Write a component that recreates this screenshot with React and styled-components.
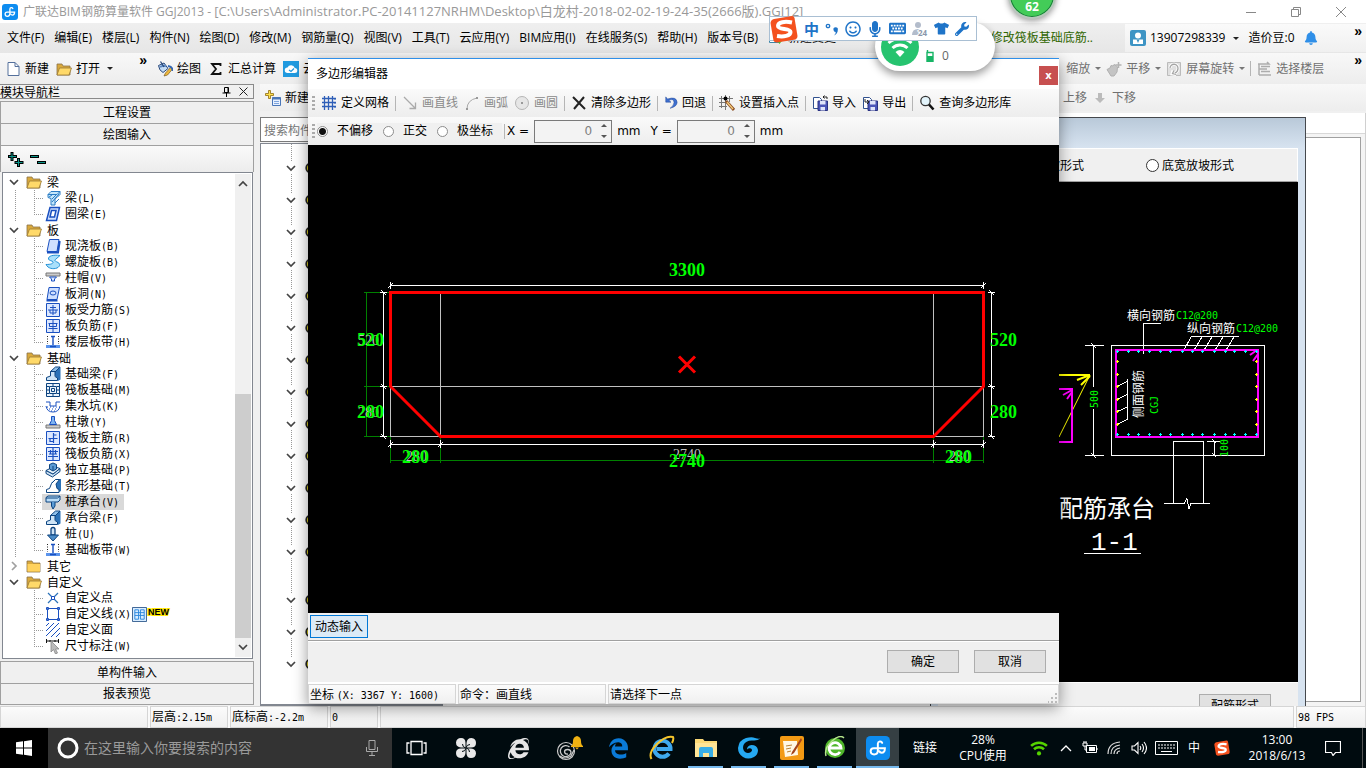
import styled, { createGlobalStyle, css } from "styled-components";
import {
  FaEdgeLegacy,
  FaInternetExplorer,
  FaKeyboard,
  FaMicrophone,
  FaRegSmile,
  FaTshirt,
  FaWrench,
  FaBell,
} from "react-icons/fa";

const UI = `"Open Sans", "Noto Sans CJK SC", sans-serif`;
const SONG = `"Noto Sans CJK SC", sans-serif`;

const GlobalStyle = createGlobalStyle`
  * { box-sizing: border-box; }
  body {
    margin: 0;
    background: #f0f0f0;
    color: #000;
    font: 12px/16px ${UI};
    overflow: hidden;
  }
  button, input { font: inherit; color: inherit; }
  button { padding: 0; border: 0; background: none; white-space: nowrap; }
  a { color: inherit; text-decoration: none; }
  svg { flex: none; display: block; }
  ul { margin: 0; padding: 0; list-style: none; }
`;

const Desktop = styled.div`
  position: relative;
  display: flex;
  flex-direction: column;
  min-height: 100vh;
  overflow: hidden;
`;

/* ---------- title + menu ---------- */

const TitleBar = styled.header`
  display: flex;
  align-items: center;
  height: 23px;
  padding: 0 20px 0 2px;
  gap: 5px;
  background: #fff;
  color: #999;
`;

const TitleText = styled.h1`
  flex: 1;
  margin: 0;
  font-size: 12px;
  font-weight: 400;
  white-space: nowrap;
`;

const FilePath = styled.span`
  font-size: 13px;
`;

const WindowButtons = styled.div`
  display: flex;
  gap: 35px;
`;

const MenuBar = styled.nav`
  display: flex;
  align-items: center;
  height: 30px;
  padding-left: 7px;
  gap: 10px;
  background: linear-gradient(#efefef, #e6e6e6);
  white-space: nowrap;
`;

const Tip = styled.a`
  margin-left: auto;
  color: #2f6600;
`;

const UserBox = styled.div`
  display: flex;
  align-items: center;
  height: 28px;
  width: 241px;
  margin-left: 22px;
  padding: 0 4px 0 5px;
  gap: 4px;
  background: linear-gradient(#fafafa, #f0f0f0);
`;

const Phone = styled.span`
  margin-right: 4px;
`;

const Beans = styled.span`
  margin: 0 5px;
`;

const Caret = styled.i`
  border: 3px solid transparent;
  border-top-color: ${(p) => p.$color || "#222"};
  border-bottom: 0;
`;

const More = styled.button`
  margin-left: ${(p) => p.$gap || "auto"};
  align-self: flex-start;
  color: #000;
  font: bold 14px/14px "Liberation Sans", sans-serif;
`;

/* ---------- toolbars ---------- */

const ToolBar = styled.div`
  display: flex;
  height: ${(p) => (p.$low ? "27px" : "31px")};
  background: linear-gradient(#f8f8f8, #ededed);
`;

const ToolGroup = styled.div`
  display: flex;
  align-items: center;
  gap: ${(p) => (p.$end ? "5px" : "7px")};
  padding: 0 5px;
  width: ${(p) => p.$width || "auto"};
  color: ${(p) => (p.$muted ? "#707070" : "inherit")};
  ${(p) => p.$end && css`
    margin-left: auto;
    padding-right: ${p.$end};
  `}
`;

const ToolButton = styled.button`
  display: flex;
  align-items: center;
  gap: 4px;
  color: ${(p) => (p.disabled ? "#8a8a8a" : "inherit")};
`;

const Sep = styled.i`
  width: 1px;
  height: 15px;
  background: #b5b5b5;
`;

const Grip = styled.i`
  width: 3px;
  height: 14px;
  background: repeating-linear-gradient(#aaa 0 2px, transparent 2px 4px);
`;

/* ---------- work area ---------- */

const Workspace = styled.main`
  flex: 1;
  display: flex;
  gap: 6px;
  min-height: 622px;
`;

const Nav = styled.aside`
  display: flex;
  flex-direction: column;
  width: 254px;
  padding-bottom: 1px;
  font-family: ${SONG};
`;

const NavHeader = styled.div`
  display: flex;
  align-items: center;
  justify-content: space-between;
  height: 15px;
  margin-bottom: 2px;
  padding-right: 4px;
  border: 1px solid #8a8a8a;
  border-left: 0;
  line-height: 13px;
`;

const NavButton = styled.button`
  height: 22px;
  padding-bottom: 2px;
  border: 1px solid #a0a0a0;
  border-bottom-width: ${(p) => (p.$last ? "1px" : "0")};
  background: #f0f0f0;
  line-height: 18px;
`;

const NavTools = styled.div`
  display: flex;
  align-items: center;
  gap: 6px;
  height: 27px;
  padding-left: 6px;
  border: 1px solid #a0a0a0;
  border-bottom: 0;
  background: linear-gradient(#fafafa, #ececec);
`;

const TreeBox = styled.div`
  flex: 1;
  display: flex;
  margin: 0 1px 2px 2px;
  border: 1px solid #828790;
  background: #fff;
`;

const TreeList = styled.ul`
  flex: 1;
  padding-top: 1px;
`;

const dots = "repeating-linear-gradient(#999 0 1px, transparent 1px 2px)";
const dotsX = "repeating-linear-gradient(90deg, #999 0 1px, transparent 1px 2px)";

const FolderRow = styled.li`
  display: flex;
  align-items: center;
  height: 16px;
  padding-left: 5px;
  white-space: nowrap;
  svg + svg { margin: 0 5px 0 6px; }
`;

const LeafRow = styled.li`
  display: flex;
  align-items: center;
  height: 16px;
  padding-left: 39px;
  white-space: nowrap;
  background:
    ${dots} 31px 0 / 1px ${(p) => (p.$last ? "8px" : "100%")} no-repeat,
    ${dotsX} 31px 8px / 10px 1px no-repeat
    ${(p) => !p.$tail && css`, ${dots} 12px 0 / 1px 100% no-repeat`};
`;

const LeafLabel = styled.span`
  display: flex;
  align-items: center;
  height: 16px;
  padding: 0 ${(p) => (p.$selected ? "5px" : "1px")} 0 3px;
  gap: 4px;
  background: ${(p) => (p.$selected ? "#d9d9d9" : "transparent")};
`;

const Mono = styled.span`
  font: 10px/16px "DejaVu Sans Mono", monospace;
`;

const ScrollBar = styled.div`
  display: flex;
  flex-direction: column;
  align-items: center;
  width: 16px;
  margin: 1px 1px 1px 0;
  padding: 4px 0;
  background: #f0f0f0;
`;

const Track = styled.div`
  flex: 205;
`;

const Thumb = styled.div`
  width: 100%;
  flex: 245;
  margin-bottom: 3px;
  background: #cdcdcd;
`;

const Main = styled.section`
  flex: 1;
  display: flex;
  flex-direction: column;
`;

const Body = styled.div`
  flex: 1;
  display: flex;
  gap: 4px;
  padding-top: 2px;
`;

const ListColumn = styled.div`
  display: flex;
  flex-direction: column;
  width: 183px;
  padding-top: 4px;
`;

const SearchInput = styled.input`
  height: 25px;
  padding: 0 3px;
  border: 1px solid #7a7a7a;
  background: #fff;
  font-family: ${SONG};
  &::placeholder { color: #777; }
`;

const ListBox = styled.div`
  flex: 1;
  margin-top: 1px;
  padding-top: 17px;
  border: 2px solid #828790;
  border-width: 1px 1px 2px;
  background: #fff ${dots} 30px 0 / 1px 520px no-repeat;
`;

const ListRow = styled.div`
  display: flex;
  align-items: center;
  height: 14px;
  padding-left: 24px;
  margin-bottom: ${(p) => (p.$wide ? "34px" : "18px")};
  gap: 7px;
  svg:first-child { background: #fff; }
`;

const DrawColumn = styled.div`
  flex: 1;
  display: flex;
  flex-direction: column;
  padding: 0 4px 4px 0;
  border-right: 1px solid #d0d0d0;
  background: linear-gradient(#fff 20px, #d8d8d8 20px 21px, #f4f4f4 21px);
`;

const DrawBox = styled.div`
  flex: 1;
  margin-top: 24px;
  border: 1px solid #a0a0a0;
  background: #fff;
`;

const StatusBar = styled.footer`
  display: flex;
  gap: 2px;
  height: 22px;
  background: #fafafa;
  font-family: ${SONG};
`;

const StatusCell = styled.div`
  flex: ${(p) => (p.$width ? "none" : 1)};
  width: ${(p) => p.$width || "auto"};
  padding-left: 1px;
  border: 1px solid #d5d5d5;
  background: linear-gradient(#fbfbfb, #f0f0f0);
  line-height: 18px;
  white-space: nowrap;
`;

/* ---------- windows ---------- */

const BackWindow = styled.section`
  position: absolute;
  left: 930px;
  right: 60px;
  top: 117px;
  bottom: 62px;
  display: flex;
  flex-direction: column;
  padding: 30px 7px 0;
  border: 1px solid #45484d;
  border-bottom: 0;
  background: linear-gradient(#b9c9d9, #d7e3f0 30px);
  font-family: ${SONG};
`;

const FormRow = styled.div`
  display: flex;
  align-items: center;
  justify-content: flex-end;
  gap: 62px;
  height: 34px;
  padding-right: 63px;
  border: 1px solid #fff;
  border-bottom-color: #a0a0a0;
  background: #f0f0f0;
`;

const RadioLabel = styled.label`
  display: flex;
  align-items: center;
  gap: ${(p) => p.$gap || "3px"};
  white-space: nowrap;
`;

const Radio = styled.input.attrs({ type: "radio" })`
  appearance: none;
  width: ${(p) => p.$size || "13px"};
  height: ${(p) => p.$size || "13px"};
  margin: 0;
  border: 1px solid ${(p) => (p.$soft ? "#8c8c8c" : "#333")};
  border-radius: 50%;
  background: #fff;
  &:checked { background: radial-gradient(#111 0 3px, #fff 4px); }
`;

const Canvas = styled.div`
  flex: 1;
  display: flex;
  background: #000;
  svg { width: 100%; height: 100%; }
`;

const BackFooter = styled.div`
  display: flex;
  justify-content: flex-end;
  height: 24px;
  padding: 11px 27px 0;
  border-top: 1px solid #fff;
  background: #f0f0f0;
  overflow: hidden;
`;

const PushButton = styled.button`
  flex: none;
  width: 72px;
  height: 23px;
  padding-bottom: 2px;
  border: 1px solid #adadad;
  background: #e1e1e1;
  line-height: 18px;
`;

const EditorWindow = styled.section`
  position: absolute;
  left: 308px;
  right: 307px;
  top: 58px;
  bottom: 64px;
  display: flex;
  flex-direction: column;
  border-top: 1px solid #2f8fe8;
  background: #f0f0f0;
  box-shadow: 0 4px 14px rgba(0, 0, 0, 0.42);
`;

const EditorTitle = styled.div`
  display: flex;
  align-items: center;
  justify-content: space-between;
  height: 30px;
  padding: 0 1px 0 8px;
  background: #fff;
`;

const CloseButton = styled.button`
  width: 19px;
  height: 19px;
  margin-top: 3px;
  background: #c75050;
  color: #fff;
  font: bold 10px/16px "DejaVu Sans", sans-serif;
`;

const EditorTools = styled.div`
  display: flex;
  align-items: center;
  gap: ${(p) => p.$gap || "6px"};
  height: 28px;
  padding: 0 4px;
  background: linear-gradient(#fafafa, #ededed);
  white-space: nowrap;
`;

const RadioSet = styled.div`
  display: flex;
  gap: 10px;
  padding-right: 9px;
  background: #f0f0f0;
`;

const Field = styled.label`
  display: flex;
  align-items: center;
  gap: 5px;
  margin-right: 8px;
  font-family: "DejaVu Sans", sans-serif;
`;

const Spin = styled.span`
  display: flex;
  align-items: center;
  width: 78px;
  height: 23px;
  padding-right: 4px;
  border: 1px solid #7a7a7a;
  background: #f3f3f3;
`;

const SpinInput = styled.input`
  flex: 1;
  width: 20px;
  padding: 0;
  border: 0;
  background: none;
  color: #808080;
  text-align: right;
`;

const Arrows = styled.span`
  display: flex;
  flex-direction: column;
  gap: 8px;
  padding-left: 9px;
`;

const Arrow = styled.button`
  border: 3px solid transparent;
  ${(p) =>
    p.$up
      ? "border-top: 0; border-bottom-color: #555;"
      : "border-bottom: 0; border-top-color: #555;"}
`;

const InputStrip = styled.div`
  height: 28px;
  padding: 2px;
  border-bottom: 1px solid #a0a0a0;
`;

const DynamicButton = styled.button`
  width: 58px;
  height: 23px;
  border: 1px solid #0078d7;
  background: #dcebf7;
`;

const Actions = styled.div`
  display: flex;
  justify-content: flex-end;
  gap: 15px;
  height: 41px;
  padding: 8px 13px 0;
  border-top: 1px solid #fff;
  font-family: ${SONG};
`;

const EditorStatus = styled.div`
  display: flex;
  gap: 2px;
  height: 22px;
  border-top: 2px solid #fff;
  background: #fafafa;
  font-family: ${SONG};
`;

const ResizeCell = styled(StatusCell)`
  display: flex;
  justify-content: space-between;
  align-items: flex-end;
`;

/* ---------- floating helpers ---------- */

const Ball = styled.div`
  position: absolute;
  left: 1008px;
  top: -29px;
  width: 48px;
  height: 48px;
  border: 2px solid #b9c7bd;
  border-radius: 50%;
  background: #43cc58;
  box-shadow: inset 0 0 0 1px #167a38, 0 2px 6px rgba(0, 0, 0, 0.4);
  color: #fff;
  font: bold 12px/16px "Open Sans", sans-serif;
  padding-top: 26px;
  text-align: center;
`;

const Pill = styled.div`
  position: absolute;
  left: 875px;
  top: 22px;
  display: flex;
  align-items: center;
  gap: 7px;
  width: 120px;
  height: 49px;
  padding-left: 6px;
  border-radius: 25px;
  background: #fff;
  box-shadow: 0 4px 8px rgba(0, 0, 0, 0.4);
  color: #666;
`;

const Devices = styled.span`
  display: flex;
  align-items: center;
  gap: 8px;
  padding-top: 18px;
`;

const Ime = styled.div`
  position: absolute;
  left: 769px;
  top: 16px;
  display: flex;
  align-items: center;
  gap: 6px;
  width: 208px;
  height: 25px;
  border: 1px solid #a9bfd3;
  background: #fff;
  color: #1f74c8;
  font: bold 15px/16px "Noto Sans CJK SC", sans-serif;
`;

/* ---------- taskbar ---------- */

const TaskBar = styled.footer`
  display: flex;
  height: 40px;
  background: #000b0f;
  color: #fff;
`;

const Start = styled.button`
  display: grid;
  place-items: center;
  width: 48px;
  background: #000;
`;

const TaskSearch = styled.label`
  display: flex;
  align-items: center;
  gap: 5px;
  width: 344px;
  padding: 0 13px 0 9px;
  background: #333;
`;

const TaskInput = styled.input`
  flex: 1;
  min-width: 0;
  padding: 0;
  border: 0;
  background: none;
  font-size: 14px;
  &::placeholder { color: #9a9a9a; }
`;

const Task = styled.button`
  display: grid;
  place-items: center;
  width: ${(p) => p.$w};
  background: ${(p) => (p.$active ? "#353f43" : "transparent")};
  ${(p) =>
    p.$open &&
    css`
      background-image: linear-gradient(#76b9ed, #76b9ed);
      background-repeat: no-repeat;
      background-position: bottom;
      background-size: ${p.$active ? "100%" : "35px"} 2px;
    `}
`;

const Links = styled.span`
  margin-left: 14px;
  line-height: 40px;
`;

const Tray = styled.div`
  display: flex;
  margin-left: auto;
  padding-right: 14px;
  border-right: 1px solid #555;
  margin-right: 3px;
`;

const TrayItem = styled.div`
  display: grid;
  place-content: center;
  width: ${(p) => p.$w};
  text-align: center;
  white-space: nowrap;
`;

/* ---------- icons ---------- */

const Svg = ({ s = 16, w, h, box = "0 0 16 16", children }) => (
  <svg width={w || s} height={h || s} viewBox={box} fill="none" aria-hidden="true">
    {children}
  </svg>
);

const AppLogo = ({ s = 16 }) => (
  <Svg s={s}>
    <rect width="16" height="16" rx="3" fill="#0d8cf0" />
    <path d="M10.800 4.600A1.500 1.500 0 0 0 7.900 5v4.500q0 2.800-2.500 2.800-2.300 0-2.300-2.200 0-2 2-2h7.500q0 3-2.200 3-1.200 0-1.500-1" stroke="#fff" strokeWidth="1.300" strokeLinecap="round" />
  </Svg>
);

const SogouLogo = ({ s = 16 }) => (
  <Svg s={s} box="0 0 28 28">
    <path d="M4 4 22 1q2 0 2.500 2l3 18q0 3-2 3.500L7 27.500q-3 0-3.500-2L.5 8Q1 4.500 4 4z" fill="#f4511e" />
    <path d="M22 7.500C15 6 8 7 8 11s12.500 2 12.500 6-7 5-13.500 4" stroke="#fff" strokeWidth="4" />
  </Svg>
);

const Fold = ({ open }) => (
  <Svg>
    <path d="M1 3h5l1 2h7v9H1z" fill="#d9a93c" stroke="#8a7247" strokeWidth=".8" />
    {open ? (
      <path d="M3.500 7h12L13 14H1z" fill="#ffd969" stroke="#9b7a35" strokeWidth=".8" />
    ) : (
      <path d="M1.500 6h12.500v7.500H1.500z" fill="#ffd25e" />
    )}
  </Svg>
);

const Chevron = ({ kind = "down" }) => (
  <Svg s={12} box="0 0 12 12">
    <path
      d={{ down: "M2 4l4 4 4-4", up: "M2 8l4-4 4 4", right: "M4 2l4 4-4 4" }[kind]}
      stroke={kind === "right" ? "#a0a0a0" : "#444"}
      strokeWidth="1.700"
    />
  </Svg>
);

const B = "#1a50c0";
const D = "#0d4480";
const frame = <path d="M1.500 1.500h13v13h-13z" fill="#dce8ff" stroke={B} />;
const strip = (
  <>
    <path d="M1 1h14v10H1z" fill="#fff" />
    <path d="M1 11h14v3H1z" fill="#5b94ec" />
    <path d="M2.500 2v8M13.500 2v8" stroke="#222" strokeDasharray="1 1.500" />
    <path d="M6 2.500h4M8 2v9M5 12.500h6" stroke={B} strokeWidth="1.400" />
  </>
);
const beam3d = (
  <>
    <path d="M8 5.500 12 1h3.500v12.500L13 15z" fill="#2b72b8" />
    <path d="M5.500 5.500 10.500 1H15l-5 5z" fill="#8fc0ea" stroke={D} />
    <path d="M5.500 5.500H10v5l2.500 1.500v2.500h-11v-3l4-1.500z" fill="#cfe5f7" stroke={D} />
  </>
);

const TREE_ICONS = {
  beam: (
    <>
      <path d="M3 4.500h9L15 1.500H6zM3 4.500v3l3 1V15h4V8.500l2-1 3-3v-3" fill="#c5e7fb" stroke="#2b7cc4" />
      <path d="M4 7l3-2M7 9l4-4M7 12l7-8M10 13l4-4" stroke="#2b7cc4" />
    </>
  ),
  ring: <path d="M5 1.500h9.500L11.500 14.500H1.500zM6.500 4.500h4.500L9.500 11H5z" fill="#cfe0ff" fillRule="evenodd" stroke={B} strokeWidth="1.500" />,
  slab: (
    <>
      <path d="M4.500 1.500h9.500L12 13.500H2z" fill="#cfe0ff" stroke={B} />
      <path d="M2 14.500h11L14.700 3" stroke={B} strokeWidth="2" />
    </>
  ),
  spiral: <path d="M15 1.500C8 .5 3 2 3.500 5c.5 2 4 1.500 4.500 3s-2 2.500-7 2.500c2 4 7 5 11 3.500 4-2 3-5 0-6-2-1-3-1.500-1-3z" fill="#a9e0fb" stroke="#2492d8" />,
  cap: (
    <>
      <path d="M1 3h14v3H1z" fill="#ccc" stroke="#777" />
      <path d="M4.500 7h7L9.500 9v2h-3V9z" fill="#dce8ff" stroke={B} />
    </>
  ),
  hole: (
    <>
      <path d="M4 1.500h10.500L12 13.500H2z" fill="#cfe0ff" stroke={B} />
      <ellipse cx="8" cy="7" rx="3" ry="2" stroke={B} />
      <path d="M1.500 14.500h11" stroke={B} strokeWidth="2" />
    </>
  ),
  force: <>{frame}<path d="M3 8h10M8 3v10M5 5.500h6M5 8v3h6V8" stroke={B} /></>,
  neg: <>{frame}<path d="M3.500 5.500h9M3.500 10.500h9M8 2v12M4.500 5.500v3h7v-3" stroke={B} /></>,
  band: strip,
  beam3d,
  raft: <path d="M1.500 1.500h13v13h-13zM4.500 4.500h7v7h-7zM6.500 6.500h3v3h-3zM1 8h4M11 8h4M8 1v4M8 11v4M1 4.500h3M12 4.500h3M1 11.500h3M12 11.500h3" fill="#eaf3fb" stroke={D} />,
  pit: (
    <>
      <path d="M1 4h4v4h6V4h4M1 8q1 6 7 6t7-6" stroke={B} />
      <path d="M2 9h12M4 11h9M6 13h5" stroke={B} strokeDasharray="1 2" />
    </>
  ),
  pier: (
    <>
      <path d="M1 11h14v3H1z" fill="#ccc" stroke="#777" />
      <path d="M6.500 2.500h3v4l2 4h-7l2-4z" fill="#7fb4f0" stroke={B} />
    </>
  ),
  rmain: <>{frame}<path d="M3.500 8.500h9M8.500 3v10M8.500 5h3M5 8.500v3h3.500" stroke={B} strokeWidth="1.200" /></>,
  rneg: <>{frame}<path d="M3 5.500h10M3 10.500h10M5.500 4v4M10.500 4v4M8 2v12M4 8h8" stroke={B} strokeWidth="1.200" /></>,
  iso: (
    <>
      <path d="M1 8.500 8 12l7-5.500v3L7.500 15 1 11.500z" fill="#cfe3f5" stroke={D} />
      <path d="M1 8.500 5 6.500l7-1 3 1L8 12z" fill="#e8f3fb" stroke={D} />
      <path d="M4.500 2.500 8 1l3.500 1.500V7L8 9 4.500 7zM8 4v5" fill="#5b9bd4" stroke={D} />
    </>
  ),
  stripf: (
    <>
      <path d="M6 5 11 1h5v12l-2 1z" fill="#2b72b8" />
      <path d="M1.500 14.500v-3l3-1 2-5 4-4h4L11 6l1 4.500 2 1v3z" fill="#fff" stroke={D} />
    </>
  ),
  pilecap: (
    <>
      <path d="M1 3.500 3 2h12v4l-2 2H1z" fill="#b9dcf7" stroke={D} />
      <path d="M1 4h11.500L15 2" stroke={D} />
      <path d="M6.500 8v4L8 15l2-3V8" fill="#5b9bd4" stroke={D} />
    </>
  ),
  pile: (
    <>
      <path d="M8 1.500q2 0 2 2V9H6V3.500q0-2 2-2z" fill="#cfe3f5" stroke={D} strokeWidth="1.300" />
      <path d="M2.500 9h11L8 15z" fill="#4b8cc8" stroke={D} />
    </>
  ),
  point: <><path d="M3 3l10 10M13 3 3 13" stroke="#2b72b8" strokeWidth="1.200" /><path d="M6.500 6.500h3v3h-3z" fill="#fff" stroke={B} /></>,
  line: <path d="M2.500 2.500h11v11h-11zM1.500 1.500h2v2h-2zM12.500 1.500h2v2h-2zM1.500 12.500h2v2h-2zM12.500 12.500h2v2h-2z" fill="#fff" stroke={B} />,
  face: <path d="M1 4l3-3M1 9l8-8M1 14 14 1M6 15l9-9M11 15l4-4" stroke={B} />,
  dim: (
    <>
      <path d="M1 3h13M1.500 1v4M13.500 1v4M5 2v2M10 2v2" stroke="#111" />
      <path d="M6 3v11l2.500-2.500L10.500 16l2-1-2-4H14z" fill="#bbb" stroke="#888" strokeWidth=".8" />
    </>
  ),
};

const NewDoc = () => (
  <Svg><path d="M3 1.500h7l4 4v9H3z" fill="#fff" stroke="#54709c" /><path d="M10 1.500v4h4" stroke="#54709c" /></Svg>
);

const Brush = () => (
  <Svg>
    <path d="M1.500 4.500 7 2l4 5.500-5 4q-4-2-4.500-7z" fill="#c4dcf5" stroke="#28477a" />
    <path d="M3 6q3-2 6-1" stroke="#5b88c4" strokeWidth="2" />
    <path d="M3.500.5 7 6" stroke="#28477a" strokeWidth="1.300" />
    <path d="M14 6 8.500 12 7 15l3.500-1L15.500 8z" fill="#f0b93a" stroke="#7a5a20" strokeWidth=".7" />
    <path d="M11 5q5 1 4.500 5" stroke="#3566b0" strokeWidth="1.800" />
  </Svg>
);

const Cloud = () => (
  <Svg>
    <path d="M0 0h16v16H0z" fill="#219adf" />
    <path d="M4.500 12a2.700 2.700 0 0 1 0-5.500 4 4 0 0 1 7.300.5 2.500 2.500 0 0 1 0 5z" fill="#fff" />
    <path d="M6 9l2 1.500L11 7.500" stroke="#219adf" strokeWidth="1.300" />
  </Svg>
);

const Pan = () => (
  <Svg>
    <path d="M1 8.500 4 7l1-2.500 2 .5 1-1.500 2 1 1.500 1.500-.5 5-3 4H5z" fill="#c4c4c4" stroke="#b0b0b0" />
    <path d="M12.500 1v6M9.500 4h6" stroke="#b3b3b3" strokeWidth="1.500" />
  </Svg>
);

const Rotate = () => (
  <Svg><path d="M1.500 1.500h13v13h-13z" fill="#e0e0e0" stroke="#bbb" /><path d="M4 7a4 4 0 0 1 8 .5q0 3-3 4.500M7 9.500 6 13l4 .5" stroke="#fff" strokeWidth="3" /><path d="M4 7a4 4 0 0 1 8 .5q0 3-3 4.500M8 9.500 6.500 12.500l3.500 1" stroke="#a5a5a5" strokeWidth="1.300" /></Svg>
);

const Floors = () => (
  <Svg><path d="M2 3h11l-2-2M5 5.500h9M3 8h8M5 10.500h9M3 14h12M3 3v11" stroke="#adadad" strokeWidth="1.500" /></Svg>
);

const AddTable = () => (
  <Svg>
    <path d="M7.500 7.500h8v8h-8z" fill="#e8f1ff" stroke="#4a76b8" />
    <path d="M7.500 8.500h8" stroke="#4a76b8" strokeWidth="2" />
    <path d="M9 11.500h5M9 13.500h5" stroke="#7fa5dd" />
    <path d="M3.500.5h2v3h3v2h-3v3h-2v-3h-3v-2h3z" fill="#ffe14d" stroke="#8d6b12" strokeWidth=".8" />
  </Svg>
);

const Grid = () => (
  <Svg><path d="M3.500 1v14M7.500 1v14M11.500 1v14M1 3.500h14M1 7.500h14M1 11.500h14" stroke="#2f5fb8" strokeWidth="1.300" /><path d="M14 3v10" stroke="#2f5fb8" strokeDasharray="2 2" /></Svg>
);

const Undo = () => (
  <Svg s={14}><path d="M2 1v6h6L5.500 5Q11 2.500 11.500 7q0 4-4.500 7Q15 12 15 7 14 0 4 3.500z" fill="#3d6fd0" stroke="#23489a" strokeWidth=".6" /></Svg>
);

const InsertPoint = () => (
  <Svg>
    <path d="M2.500 1v12M6.500 0v15M10.500 1v6M0 3.500h14M0 7.500h9M0 11.500h8" stroke="#777" />
    <circle cx="6.500" cy="3.500" r="2" fill="#000" />
    <path d="M7 6l8 9" stroke="#8a4b20" strokeWidth="3" />
    <path d="M8 7l6 7" stroke="#f1c877" strokeWidth="1.500" />
  </Svg>
);

const Disk = ({ out }) => (
  <Svg>
    <path d="M1.500 2.500h6l2 2v9h-8z" fill="#fff" stroke="#31518f" />
    <path d="M6 6h9.500v9.500H6z" fill="#4a55b8" stroke="#2a3382" />
    <path d="M8 6h5.500v3.500H8zM8.500 12h4.500v3.500H8.500z" fill="#dfe4fa" />
    <path d={out ? "M3 4v3h4M5 5l2 2-2 2" : "M15 4V2h-4M12.500.5 11 2l1.500 1.500"} stroke="#222" />
  </Svg>
);

const Magnifier = () => (
  <Svg><circle cx="6.500" cy="6" r="4.700" fill="#e3f4fb" stroke="#333" strokeWidth="1.300" /><path d="M10 9.500l4.500 5" stroke="#111" strokeWidth="2.600" /></Svg>
);

const Wifi = ({ s, color }) => (
  <Svg s={s} box="0 0 24 24">
    <path d="M2.500 9.500a13.500 13.500 0 0 1 19 0M6 13.500a8.500 8.500 0 0 1 12 0" stroke={color} strokeWidth="3" />
    <circle cx="12" cy="18.500" r="2.500" fill={color} />
  </Svg>
);

const SizeGrip = () => (
  <Svg s={10} box="0 0 10 10"><path d="M7 0h2v2H7zM7 4h2v2H7zM7 8h2v2H7zM3 4h2v2H3zM3 8h2v2H3zM0 8h1v2H0z" fill="#bbb" /></Svg>
);

/* ---------- data ---------- */

const tree = [
  { name: "梁", open: true, items: [["beam", "梁", "(L)"], ["ring", "圈梁", "(E)"]] },
  {
    name: "板",
    open: true,
    items: [
      ["slab", "现浇板", "(B)"],
      ["spiral", "螺旋板", "(B)"],
      ["cap", "柱帽", "(V)"],
      ["hole", "板洞", "(N)"],
      ["force", "板受力筋", "(S)"],
      ["neg", "板负筋", "(F)"],
      ["band", "楼层板带", "(H)"],
    ],
  },
  {
    name: "基础",
    open: true,
    items: [
      ["beam3d", "基础梁", "(F)"],
      ["raft", "筏板基础", "(M)"],
      ["pit", "集水坑", "(K)"],
      ["pier", "柱墩", "(Y)"],
      ["rmain", "筏板主筋", "(R)"],
      ["rneg", "筏板负筋", "(X)"],
      ["iso", "独立基础", "(P)"],
      ["stripf", "条形基础", "(T)"],
      ["pilecap", "桩承台", "(V)"],
      ["beam3d", "承台梁", "(F)"],
      ["pile", "桩", "(U)"],
      ["band", "基础板带", "(W)"],
    ],
  },
  { name: "其它", open: false, items: [] },
  {
    name: "自定义",
    open: true,
    items: [["point", "自定义点"], ["line", "自定义线", "(X)"], ["face", "自定义面"], ["dim", "尺寸标注", "(W)"]],
  },
];

const menus = [
  "文件(F)", "编辑(E)", "楼层(L)", "构件(N)", "绘图(D)", "修改(M)", "钢筋量(Q)",
  "视图(V)", "工具(T)", "云应用(Y)", "BIM应用(I)", "在线服务(S)", "帮助(H)", "版本号(B)",
];

const listRows = Array.from({ length: 16 }, (_, i) => i);

const barX = [179, 190, 200, 211, 222, 232, 244, 254, 264, 276, 287, 296, 307, 318];
const barY = [179, 192, 204, 217, 229, 242];

/* ---------- parts ---------- */

const NewBadge = () => (
  <>
    <Svg s={15}><path d="M.5.5h15v15H.500z" fill="#d8ecff" stroke="#335d8f" /><path d="M3 3h4v10H3zM9 3h4v10H9zM3 6h10M3 9h10" stroke="#2a86dd" /></Svg>
    <svg width="24" height="14" viewBox="0 0 24 14" aria-hidden="true">
      <text x="1" y="8" fontSize="9" fontWeight="700" fontFamily="Liberation Sans" stroke="#ffe600" strokeWidth="2" paintOrder="stroke" fill="#000">NEW</text>
    </svg>
  </>
);

const Tree = () => (
  <TreeList>
    {tree.map((group, g) => [
      <FolderRow key={group.name}>
        <Chevron kind={group.open ? "down" : "right"} />
        <Fold open={group.open} />
        {group.name}
      </FolderRow>,
      ...group.items.map(([icon, label, key], i) => (
        <LeafRow key={group.name + label} $last={i === group.items.length - 1} $tail={g >= tree.length - 2}>
          <LeafLabel $selected={icon === "pilecap"}>
            <Svg>{TREE_ICONS[icon]}</Svg>
            <span>
              {label}
              <Mono>{key}</Mono>
            </span>
          </LeafLabel>
          {icon === "line" && <NewBadge />}
        </LeafRow>
      )),
    ])}
  </TreeList>
);

const NavPanel = () => (
  <Nav>
    <NavHeader>
      模块导航栏
      <Svg w={28} h={11} box="0 0 28 11">
        <path d="M3.500 1.500h4v5h-4zM1.500 7h8M5.500 7v4M7 2v4" stroke="#000" />
        <path d="M18.500 1.500l8 8M26.500 1.500l-8 8" stroke="#222" />
      </Svg>
    </NavHeader>
    <NavButton>工程设置</NavButton>
    <NavButton>绘图输入</NavButton>
    <NavTools>
      <Svg w={17} h={16} box="0 0 17 16"><path d="M5 1v9M1 5.500h9M11.500 7v9M7.500 11.500h9" stroke="#000" strokeWidth="3" /><path d="M5 2v7M2 5.500h7M11.500 8v7M8.500 11.500h7" stroke="#0a9488" /></Svg>
      <Svg w={17} h={16} box="0 0 17 16"><path d="M0 5.500h9M7 11.500h9" stroke="#000" strokeWidth="3" /><path d="M1 5.500h7M8 11.500h7" stroke="#0a9488" /></Svg>
    </NavTools>
    <TreeBox>
      <Tree />
      <ScrollBar>
        <Chevron kind="up" />
        <Track />
        <Thumb />
        <Chevron />
      </ScrollBar>
    </TreeBox>
    <NavButton>单构件输入</NavButton>
    <NavButton $last>报表预览</NavButton>
  </Nav>
);

const green = { fill: "#0f0", fontFamily: "Liberation Serif", fontWeight: 700, fontSize: 18 };
const ghost = { fill: "#c0c0c0", fontFamily: "Liberation Serif", fontSize: 14 };

const PolygonDrawing = () => (
  <svg viewBox="0 0 751 468" role="img" aria-label="多边形">
    <g stroke="#008000" shapeRendering="crispEdges">
      <path d="M58.500 147v145M56 147.500h26M56 241.500h26M56 291.500h26M82 315.500h594M82.500 291v27M132.500 291v27M625.500 291v27M675.500 291v27" />
    </g>
    <g stroke="#c0c0c0" fill="none" shapeRendering="crispEdges">
      <path d="M132.500 147v145M625.500 147v145M82 241.500h594M82.500 241v50.500h593V241" />
    </g>
    <g stroke="#fff" shapeRendering="crispEdges">
      <path d="M82 140.500h594M82.500 137v7M675.500 137v7M75.500 147v145M72 147.500h7M72 241.500h7M72 291.500h7M683.500 147v145M680 147.500h7M680 241.500h7M680 291.500h7M82 299.500h594M82.500 295v8M132.500 295v8M625.500 295v8M675.500 295v8" />
      <path d="M80 143l5-5M673 143l5-5M73 145l5 5M73 239l5 5M73 289l5 5M681 145l5 5M681 239l5 5M681 289l5 5M80 302l5-5M130 302l5-5M623 302l5-5M673 302l5-5" />
    </g>
    <path d="M82.500 147.500h593v94l-50 50h-493l-50-50z" fill="none" stroke="#f00" strokeWidth="3" />
    <path d="M371 211.500l16 16M387 211.500l-16 16" stroke="#f00" strokeWidth="3" />
    <g style={ghost}>
      <text x="50" y="200">520</text>
      <text x="50" y="272">280</text>
      <text x="98" y="316">280</text>
      <text x="641" y="316">280</text>
      <text x="365" y="314">2740</text>
    </g>
    <g style={green}>
      <text x="361" y="131">3300</text>
      <text x="49" y="201">520</text>
      <text x="49" y="273">280</text>
      <text x="682" y="201">520</text>
      <text x="682" y="273">280</text>
      <text x="94" y="318">280</text>
      <text x="637" y="318">280</text>
      <text x="361" y="322">2740</text>
    </g>
  </svg>
);

const Dot = ({ x, y, c }) => <path d={`M${x - 1} ${y + 0.5}h3M${x + 0.5} ${y - 1}v3`} stroke={c} />;

const SectionDrawing = () => (
  <svg viewBox="0 0 360 500" role="img" aria-label="配筋承台 1-1" fill="none">
    <g stroke="#fff" shapeRendering="crispEdges">
      <path d="M173.500 163.500h153v110h-153zM223 141.500h-17.500V172M253 154.500h48" />
      <path d="M253 155l-8 15M264 155l-9 15M274 155l-9 15M285 155l-9 15M296 155l-9 15" />
      <path d="M189.500 197v41M189.500 199l-9 5M189.500 212l-9 5M189.500 225l-9 4M189.500 237l-9 5" />
      <path d="M155.500 163v42M155.500 227v47M147 163.500h19M147 273.500h19M153 161l5 5M153 271l5 5" />
      <path d="M276.500 260v14M269 259.500h13M274 257l4 4M274 271l4 4" />
      <path d="M235.500 321V259.500h30V321M226 321.500h20l3-5 2 10 2-5h19M146 371.500h57" />
    </g>
    <path d="M178 168h142v87H178z" stroke="#f0f" strokeWidth="2" />
    <path d="M319 168l-7 5M320 172l-5 7" stroke="#f0f" strokeWidth="2" />
    <g shapeRendering="crispEdges">
      {barX.map((x) => [<Dot key={"t" + x} x={x} y={169} c="#0ff" />, <Dot key={"b" + x} x={x} y={252} c="#0ff" />])}
      {barY.map((y) => [<Dot key={"l" + y} x={179} y={y} c="#ff0" />, <Dot key={"r" + y} x={318} y={y} c="#ff0" />])}
    </g>
    <path d="M100 193h52M152 193l-13 5M152 194l-9 9" stroke="#ff0" strokeWidth="2" />
    <path d="M152 193l-31 62" stroke="#ff0" />
    <path d="M100 207h34v53h-34M134 208l-9 5M134 210l-5 7" stroke="#f0f" strokeWidth="2" />
    <g fill="#fff" fontFamily="Noto Sans CJK SC" fontSize="12">
      <text x="189" y="138">横向钢筋</text>
      <text x="249" y="151">纵向钢筋</text>
      <text transform="translate(205 236) rotate(-90)">侧面钢筋</text>
      <text x="121" y="335" fontSize="24">配筋承台</text>
      <text x="153" y="368" fontSize="26" fontFamily="Liberation Mono">1-1</text>
    </g>
    <g fill="#0f0" fontFamily="DejaVu Sans Mono" fontSize="10">
      <text x="238" y="137">C12@200</text>
      <text x="298" y="150">C12@200</text>
      <text transform="translate(220 232) rotate(-90)">CGJ</text>
      <text transform="translate(160 226) rotate(-90)">500</text>
      <text transform="translate(290 275) rotate(-90)">100</text>
    </g>
  </svg>
);

const SpinField = ({ label }) => (
  <Field>
    {label} =
    <Spin>
      <SpinInput defaultValue="0" />
      <Arrows>
        <Arrow $up aria-label={label + "+"} />
        <Arrow aria-label={label + "-"} />
      </Arrows>
    </Spin>
    mm
  </Field>
);

const PolygonEditor = () => (
  <EditorWindow>
    <EditorTitle>
      多边形编辑器
      <CloseButton>x</CloseButton>
    </EditorTitle>
    <EditorTools>
      <Grip />
      <ToolButton><Grid />定义网格</ToolButton>
      <Sep />
      <ToolButton disabled><Svg><path d="M2 2l11 11M7.500 13.500h6v-6" stroke="#aaa" strokeWidth="1.300" /></Svg>画直线</ToolButton>
      <ToolButton disabled><Svg><path d="M3 14Q3 5 13 3" stroke="#aaa" /><path d="M2 13h2v2H2zM12 2h2v2h-2z" fill="#999" /></Svg>画弧</ToolButton>
      <ToolButton disabled><Svg><circle cx="8" cy="8" r="6.500" fill="#e6e6e6" stroke="#b5b5b5" /><path d="M7 7h2v2H7z" fill="#999" /></Svg>画圆</ToolButton>
      <Sep />
      <ToolButton><Svg><path d="M2 2l12 12M13 2 3 14" stroke="#222" strokeWidth="2" /></Svg>清除多边形</ToolButton>
      <Sep />
      <ToolButton><Undo />回退</ToolButton>
      <Sep />
      <ToolButton><InsertPoint />设置插入点</ToolButton>
      <Sep />
      <ToolButton><Disk />导入</ToolButton>
      <ToolButton><Disk out />导出</ToolButton>
      <Sep />
      <ToolButton><Magnifier />查询多边形库</ToolButton>
    </EditorTools>
    <EditorTools $gap="2px">
      <Grip />
      <RadioSet>
        <RadioLabel $gap="9px"><Radio name="shift" $soft $size="11px" defaultChecked />不偏移</RadioLabel>
        <RadioLabel $gap="9px"><Radio name="shift" $soft $size="11px" />正交</RadioLabel>
        <RadioLabel $gap="9px"><Radio name="shift" $soft $size="11px" />极坐标</RadioLabel>
      </RadioSet>
      <Sep />
      <SpinField label="X" />
      <SpinField label="Y" />
    </EditorTools>
    <Canvas><PolygonDrawing /></Canvas>
    <InputStrip><DynamicButton>动态输入</DynamicButton></InputStrip>
    <Actions>
      <PushButton>确定</PushButton>
      <PushButton>取消</PushButton>
    </Actions>
    <EditorStatus>
      <StatusCell $width="148px">坐标 <Mono>(X: 3367 Y: 1600)</Mono></StatusCell>
      <StatusCell $width="148px">命令：画直线</StatusCell>
      <ResizeCell><span>请选择下一点</span><SizeGrip /></ResizeCell>
    </EditorStatus>
  </EditorWindow>
);

const SectionWindow = () => (
  <BackWindow>
    <FormRow>
      <RadioLabel><Radio name="slope" />角度放坡形式</RadioLabel>
      <RadioLabel><Radio name="slope" />底宽放坡形式</RadioLabel>
    </FormRow>
    <Canvas><SectionDrawing /></Canvas>
    <BackFooter><PushButton>配筋形式</PushButton></BackFooter>
  </BackWindow>
);

const ImeBar = () => (
  <Ime>
    <SogouLogo s={28} />
    中
    <Svg s={14} box="0 0 14 14"><circle cx="3" cy="4" r="1.700" stroke="#1f74c8" strokeWidth="1.300" /><path d="M8.500 8a2.200 2.200 0 1 1 4.300 0q0 3.500-3.800 5.500 2-2 1.700-3.500-2 0-2.200-2z" fill="#1f74c8" /></Svg>
    <FaRegSmile size={16} />
    <FaMicrophone size={16} />
    <FaKeyboard size={17} />
    <Svg><circle cx="6" cy="4" r="3" fill="#b3bccb" /><path d="M0 14q0-6 6-6t6 6z" fill="#b3bccb" /><text x="6" y="15" fontSize="8" fontWeight="700" fontFamily="Open Sans" fill="#8b97ab" stroke="#fff" strokeWidth="2" paintOrder="stroke">24</text></Svg>
    <FaTshirt size={15} />
    <FaWrench size={14} />
  </Ime>
);

const WifiPill = () => (
  <Pill>
    <Svg s={38} box="0 0 38 38">
      <circle cx="19" cy="19" r="19" fill="#26c36f" />
      <path d="M7.500 15a17 17 0 0 1 23 0M11.500 20a11 11 0 0 1 15 0" stroke="#fff" strokeWidth="3" />
      <path d="M14.500 24q4.500-4 9 0L19 29z" fill="#fff" />
    </Svg>
    <Devices>
      <Svg w={8} h={12} box="0 0 8 12"><path d="M1 2.500h6v9H1zM1.500 0v3" stroke="#17b566" strokeWidth="1.400" /><path d="M1 6h6v5H1z" fill="#17b566" /></Svg>
      0
    </Devices>
  </Pill>
);

const Taskbar = () => (
  <TaskBar>
    <Start aria-label="开始">
      <Svg s={16}><path d="M0 2.300 7 1.300V7.500H0zM8 1.200 16 0v7.500H8zM0 8.500h7v6.200L0 13.700zM8 8.500h8V16l-8-1.200z" fill="#fff" /></Svg>
    </Start>
    <TaskSearch>
      <Svg s={22} box="0 0 22 22"><circle cx="11" cy="11" r="9" stroke="#fff" strokeWidth="3" /></Svg>
      <TaskInput placeholder="在这里输入你要搜索的内容" />
      <Svg w={14} h={18} box="0 0 14 18"><path d="M4 1.500h6v9H4zM1.500 8v4.500h11V8M7 13v3.500M4 16.500h6" stroke="#aaa" /></Svg>
    </TaskSearch>
    <Task $w="48px"><Svg w={21} h={16} box="0 0 21 16"><path d="M5 1.500h11v13H5zM3.500 3H1v10h2.500M17.500 3H20v10h-2.500" stroke="#fff" strokeWidth="1.300" /></Svg></Task>
    <Task $w="52px">
      <Svg s={22} box="0 0 22 22">
        <path d="M10.500 10.500H6Q1 10 1 5.500 1.500 1 6 1q4.500 0 4.500 5zM11.500 10.500V6Q12 1 16.500 1 21 1.500 21 6q0 4.500-5 4.500zM11.500 11.500H16q5 .5 5 5-.5 4.500-5 4.500-4.500 0-4.500-5zM10.500 11.500V16q-.5 5-5 5Q1 20.500 1 16q0-4.500 5-4.500z" fill="#e9e9e9" />
        <path d="M10.500 11q-3-1-3-4M11 11.500q-1 3-4 3M11.500 11q3 1 3 4M11 10.500q1-3 4-3" stroke="#000b0f" />
      </Svg>
    </Task>
    <Task $w="52px"><FaInternetExplorer size={21} color="#e6e6e6" /></Task>
    <Task $w="52px">
      <Svg w={28} h={26} box="0 0 28 26">
        <circle cx="10" cy="16" r="8.500" stroke="#ccc" strokeWidth="1.200" />
        <path d="M13.500 12a5.500 5.500 0 1 0 1.500 6q0-3.500-3.500-3.500-3 0-3 2.500.500 2.500 3.500 2" stroke="#ccc" strokeWidth="1.300" />
        <path d="M4 21q5 4 11 0l3-6" stroke="#ccc" strokeWidth="1.200" />
        <path d="M15 11q2-1 2-5 0-4 4-5 4 1 4 5 0 4 2 5v1H15zM19 12.500h4l-2 2z" fill="#f0b212" />
      </Svg>
    </Task>
    <Task $w="44px"><FaEdgeLegacy size={21} color="#0a7ad8" /></Task>
    <Task $w="44px">
      <Svg s={26} box="0 0 26 26">
        <path d="M20 18.500A8 8 0 1 1 21.500 14H8" stroke="#3fa9ee" strokeWidth="4" />
        <path d="M2.500 24Q-1 18 8 9T24 2q1 2-1 6" stroke="#f5c52c" strokeWidth="2" />
      </Svg>
    </Task>
    <Task $w="43px" $open>
      <Svg s={22} box="0 0 22 22"><path d="M0 2h8l1.500 2H22v16H0z" fill="#fbd976" /><path d="M0 6h22v14H0z" fill="#ffe596" /><path d="M4 20v-8q0-2 2-2h10q2 0 2 2v8h-4v-4H8v4z" fill="#38aee6" /></Svg>
    </Task>
    <Task $w="43px" $open>
      <Svg s={24} box="0 0 24 24"><path d="M23.500 2.500Q20 5 16 4.500 9 4 6.500 9 5 13 8 16q3 2 6 0 2-2 0-3.500-2-1-4 1 0-4 4.500-4.500Q20 9 21 14q0 5-4 7-6 3-11 0-5-3-5-9Q2 4 9 2q6-1.500 9 0 3 1 5.500.5z" fill="#25a9f2" /></Svg>
    </Task>
    <Task $w="43px" $open>
      <Svg s={24} box="0 0 24 24"><rect width="24" height="24" rx="2" fill="#f39a14" /><path d="M3 5h14l1 14-13 2z" fill="#fff7e4" /><path d="M6 10l6-1M6 13l5-1M7 16l4-1" stroke="#b98135" /><path d="M21 2 12 16l-1 3 3-2 8-13z" fill="#a4431b" /></Svg>
    </Task>
    <Task $w="43px" $open>
      <Svg s={24} box="0 0 24 24"><circle cx="12" cy="12" r="10" fill="#4fb62b" /><path d="M17 16a6 6 0 1 1 1-4H7" stroke="#fff" strokeWidth="2.800" /><path d="M3 20Q1 12 9 5t12-3" stroke="#b5e58d" strokeWidth="1.500" /></Svg>
    </Task>
    <Task $w="43px" $open $active><AppLogo s={24} /></Task>
    <Links>链接</Links>
    <Tray>
      <TrayItem $w="82px"><span>28%</span><span>CPU使用</span></TrayItem>
      <TrayItem $w="30px"><Wifi s={20} color="#55d400" /></TrayItem>
      <TrayItem $w="24px"><Svg s={12} box="0 0 12 12"><path d="M1 9l5-5 5 5" stroke="#fff" strokeWidth="1.300" /></Svg></TrayItem>
      <TrayItem $w="24px"><Svg s={16}><path d="M4.500 5.500h10v7h-10zM15 8v2M1 3h4v3H1zM2 1v2M4 1v2M3 6v4h2" stroke="#fff" /><path d="M7 7h6v4H7z" fill="#fff" /></Svg></TrayItem>
      <TrayItem $w="24px"><Svg s={14} box="0 0 14 14"><path d="M1 13Q1 2 13 1M4 13q0-8 9-9M7 13q0-5 6-6M10 13q0-3 3-3" stroke="#ddd" strokeWidth="1.200" /></Svg></TrayItem>
      <TrayItem $w="26px"><Svg s={16}><path d="M1 6h2.500L7 2.500v11L3.500 10H1zM9 6q1.500 2 0 4M11 4q3 4 0 8M13 2q5 6 0 12" stroke="#fff" strokeWidth="1.100" /></Svg></TrayItem>
      <TrayItem $w="28px"><Svg w={23} h={14} box="0 0 23 14"><path d="M.5.500h22v13H.500z" stroke="#fff" /><path d="M3 4h17M3 7h17" stroke="#fff" strokeDasharray="2 1" /><path d="M6 10.500h11" stroke="#fff" /></Svg></TrayItem>
      <TrayItem $w="28px">中</TrayItem>
      <TrayItem $w="28px"><SogouLogo /></TrayItem>
      <TrayItem $w="82px"><span>13:00</span><span>2018/6/13</span></TrayItem>
      <TrayItem $w="30px"><Svg s={16}><path d="M.5 1.500h15v11h-5L8 15.500 6.500 12.500h-6z" stroke="#fff" strokeWidth="1.200" /></Svg></TrayItem>
    </Tray>
  </TaskBar>
);

const AppMenu = () => (
  <MenuBar>
    {menus.map((m) => (
      <button key={m}>{m}</button>
    ))}
    <ToolButton>
      <Svg><path d="M1.500 2.500h10v10h-10z" fill="#fff" stroke="#3d86a8" /><path d="M7 8h3V6h4v2h2l-4.500 6z" fill="#4dbb2c" /></Svg>
      新建变更
    </ToolButton>
    <Tip href="#tip">修改筏板基础底筋..</Tip>
    <UserBox>
      <Svg><rect width="16" height="16" rx="2" fill="#3d94c4" /><circle cx="8" cy="5.500" r="3" fill="#fff" /><path d="M3 14V9.500h10V14z" fill="#fff" /><path d="M6.500 9.500h3L8 13z" fill="#3d94c4" /></Svg>
      <Phone>13907298339</Phone>
      <Caret />
      <Beans>造价豆:0</Beans>
      <FaBell size={14} color="#2f8fe8" />
      <More>»</More>
    </UserBox>
  </MenuBar>
);

const MainTools = () => (
  <ToolBar>
    <ToolGroup $width="152px">
      <ToolButton><NewDoc />新建</ToolButton>
      <ToolButton><Fold open />打开</ToolButton>
      <Caret />
      <More>»</More>
    </ToolGroup>
    <ToolGroup>
      <ToolButton><Brush />绘图</ToolButton>
      <ToolButton><Svg><path d="M12.500 5V3H4l4 5-4 5h8.500v-2" stroke="#111" strokeWidth="1.800" /></Svg>汇总计算</ToolButton>
      <ToolButton><Cloud />云检查</ToolButton>
    </ToolGroup>
    <ToolGroup $end="4px" $muted>
      <ToolButton>缩放</ToolButton>
      <Caret $color="#777" />
      <ToolButton><Pan />平移</ToolButton>
      <Caret $color="#777" />
      <ToolButton><Rotate />屏幕旋转</ToolButton>
      <Caret $color="#777" />
      <Sep />
      <ToolButton><Floors />选择楼层</ToolButton>
      <More $gap="25px">»</More>
    </ToolGroup>
  </ToolBar>
);

export default function App() {
  return (
    <>
      <GlobalStyle />
      <Desktop>
        <TitleBar>
          <AppLogo />
          <TitleText>
            广联达BIM钢筋算量软件 GGJ2013 -{" "}
            <FilePath>[C:\Users\Administrator.PC-20141127NRHM\Desktop\白龙村-2018-02-02-19-24-35(2666版).GGJ12]</FilePath>
          </TitleText>
          <WindowButtons>
            <button aria-label="最小化"><Svg s={10} box="0 0 10 10"><path d="M0 5.500h10" stroke="#888" /></Svg></button>
            <button aria-label="还原"><Svg s={10} box="0 0 10 10"><path d="M.5 2.500h7v7h-7zM2.500 2V.500h7v7H8" stroke="#888" /></Svg></button>
            <button aria-label="关闭"><Svg s={10} box="0 0 10 10"><path d="M0 0l10 10M10 0 0 10" stroke="#888" /></Svg></button>
          </WindowButtons>
        </TitleBar>
        <AppMenu />
        <MainTools />
        <Workspace>
          <NavPanel />
          <Main>
            <ToolBar $low>
              <ToolGroup><ToolButton><AddTable />新建</ToolButton></ToolGroup>
              <ToolGroup $end="230px" $muted>
                <ToolButton>上移</ToolButton>
                <ToolButton><Svg><path d="M6 3h4v5h3l-5 5-5-5h3z" fill="#bbb" /></Svg>下移</ToolButton>
              </ToolGroup>
            </ToolBar>
            <Body>
              <ListColumn>
                <SearchInput placeholder="搜索构件" aria-label="搜索构件" />
                <ListBox>
                  {listRows.map((i) => (
                    <ListRow key={i} $wide={i === 12}>
                      <Chevron />
                      <Svg s={14}><circle cx="8" cy="8" r="5.500" fill="#e6dc1e" stroke="#222" strokeWidth="2" /></Svg>
                    </ListRow>
                  ))}
                </ListBox>
              </ListColumn>
              <DrawColumn>
                <DrawBox />
              </DrawColumn>
            </Body>
          </Main>
        </Workspace>
        <StatusBar>
          <StatusCell $width="148px" />
          <StatusCell $width="78px">层高<Mono>:2.15m</Mono></StatusCell>
          <StatusCell $width="98px">底标高<Mono>:-2.2m</Mono></StatusCell>
          <StatusCell $width="48px"><Mono>0</Mono></StatusCell>
          <StatusCell />
          <StatusCell $width="70px"><Mono>98 FPS</Mono></StatusCell>
        </StatusBar>
        <Taskbar />
        <SectionWindow />
        <PolygonEditor />
        <WifiPill />
        <ImeBar />
        <Ball>62</Ball>
      </Desktop>
    </>
  );
}
